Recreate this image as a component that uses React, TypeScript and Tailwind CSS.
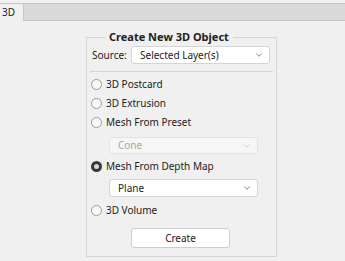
import { ChevronDown } from "lucide-react";

function Radio({ label, checked }: { label: string; checked?: boolean }) {
  return (
    <div className="flex h-[19px] items-center pl-[4px]">
      {checked ? (
        <span className="flex h-[11px] w-[11px] items-center justify-center rounded-full bg-[#383838]">
          <span className="h-[5px] w-[5px] rounded-full bg-[#d8d8d8]" />
        </span>
      ) : (
        <span className="h-[11px] w-[11px] rounded-full border border-[#9a9a9a] bg-[#f8f8f8]" />
      )}
      <span className="ml-[4px] text-[#222222]">{label}</span>
    </div>
  );
}

function Select({
  value,
  disabled,
  className,
}: {
  value: string;
  disabled?: boolean;
  className: string;
}) {
  return (
    <div
      className={`flex items-center justify-between rounded-[3px] border pl-[8px] pr-[5px] ${
        disabled
          ? "border-[#e3e3e3] bg-[#f6f6f6] text-[#a6a6a6]"
          : "border-[#d4d4d4] bg-white text-[#222222]"
      } ${className}`}
    >
      <span>{value}</span>
      <ChevronDown
        className={`h-[10px] w-[10px] ${disabled ? "text-[#c2c2c2]" : "text-[#555555]"}`}
        strokeWidth={1.75}
      />
    </div>
  );
}

export default function App() {
  return (
    <div
      className="h-[261px] w-[345px] overflow-hidden bg-[#f0f0f0] text-[10px]"
      style={{ fontFamily: '"Noto Sans", "Liberation Sans", sans-serif' }}
    >
      {/* Tab strip */}
      <div className="h-[3px] bg-[#f0f0f0]" />
      <div className="flex h-[18px]">
        <div className="flex w-[24px] items-center border-t border-r border-[#c6c6c6] bg-[#f0f0f0] pl-[2px] text-[#222222]">
          3D
        </div>
        <div className="flex-1 border-t border-b border-[#c6c6c6] bg-[#dadada]" />
      </div>

      {/* Group box */}
      <fieldset className="ml-[86px] mt-[9px] w-[191px] border border-[#d6d6d6] px-0 pb-[8px]">
        <legend className="ml-[18px] px-[4px] text-[11px] leading-[14px] font-bold text-[#222222]">
          Create New 3D Object
        </legend>

        <div className="mt-[2px] flex items-center pl-[5px]">
          <span className="w-[39px] text-[#222222]">Source:</span>
          <Select value="Selected Layer(s)" className="h-[18px] w-[139px]" />
        </div>

        <div className="mx-[3px] mt-[7px] h-px bg-[#d6d6d6]" />

        <div className="mt-[3px] flex flex-col">
          <Radio label="3D Postcard" />
          <Radio label="3D Extrusion" />
          <Radio label="Mesh From Preset" />
          <Select value="Cone" disabled className="ml-[22px] mt-[5px] h-[17px] w-[149px]" />
          <div className="mt-[3px]">
            <Radio label="Mesh From Depth Map" checked />
          </div>
          <Select value="Plane" className="ml-[22px] mt-[3px] h-[18px] w-[149px]" />
          <div className="mt-[4px]">
            <Radio label="3D Volume" />
          </div>
          <div className="mt-[8px] flex pl-[44px]">
            <button className="h-[20px] w-[99px] rounded-[3px] border border-[#cfcfcf] bg-white text-[#222222]">
              Create
            </button>
          </div>
        </div>
      </fieldset>
    </div>
  );
}
